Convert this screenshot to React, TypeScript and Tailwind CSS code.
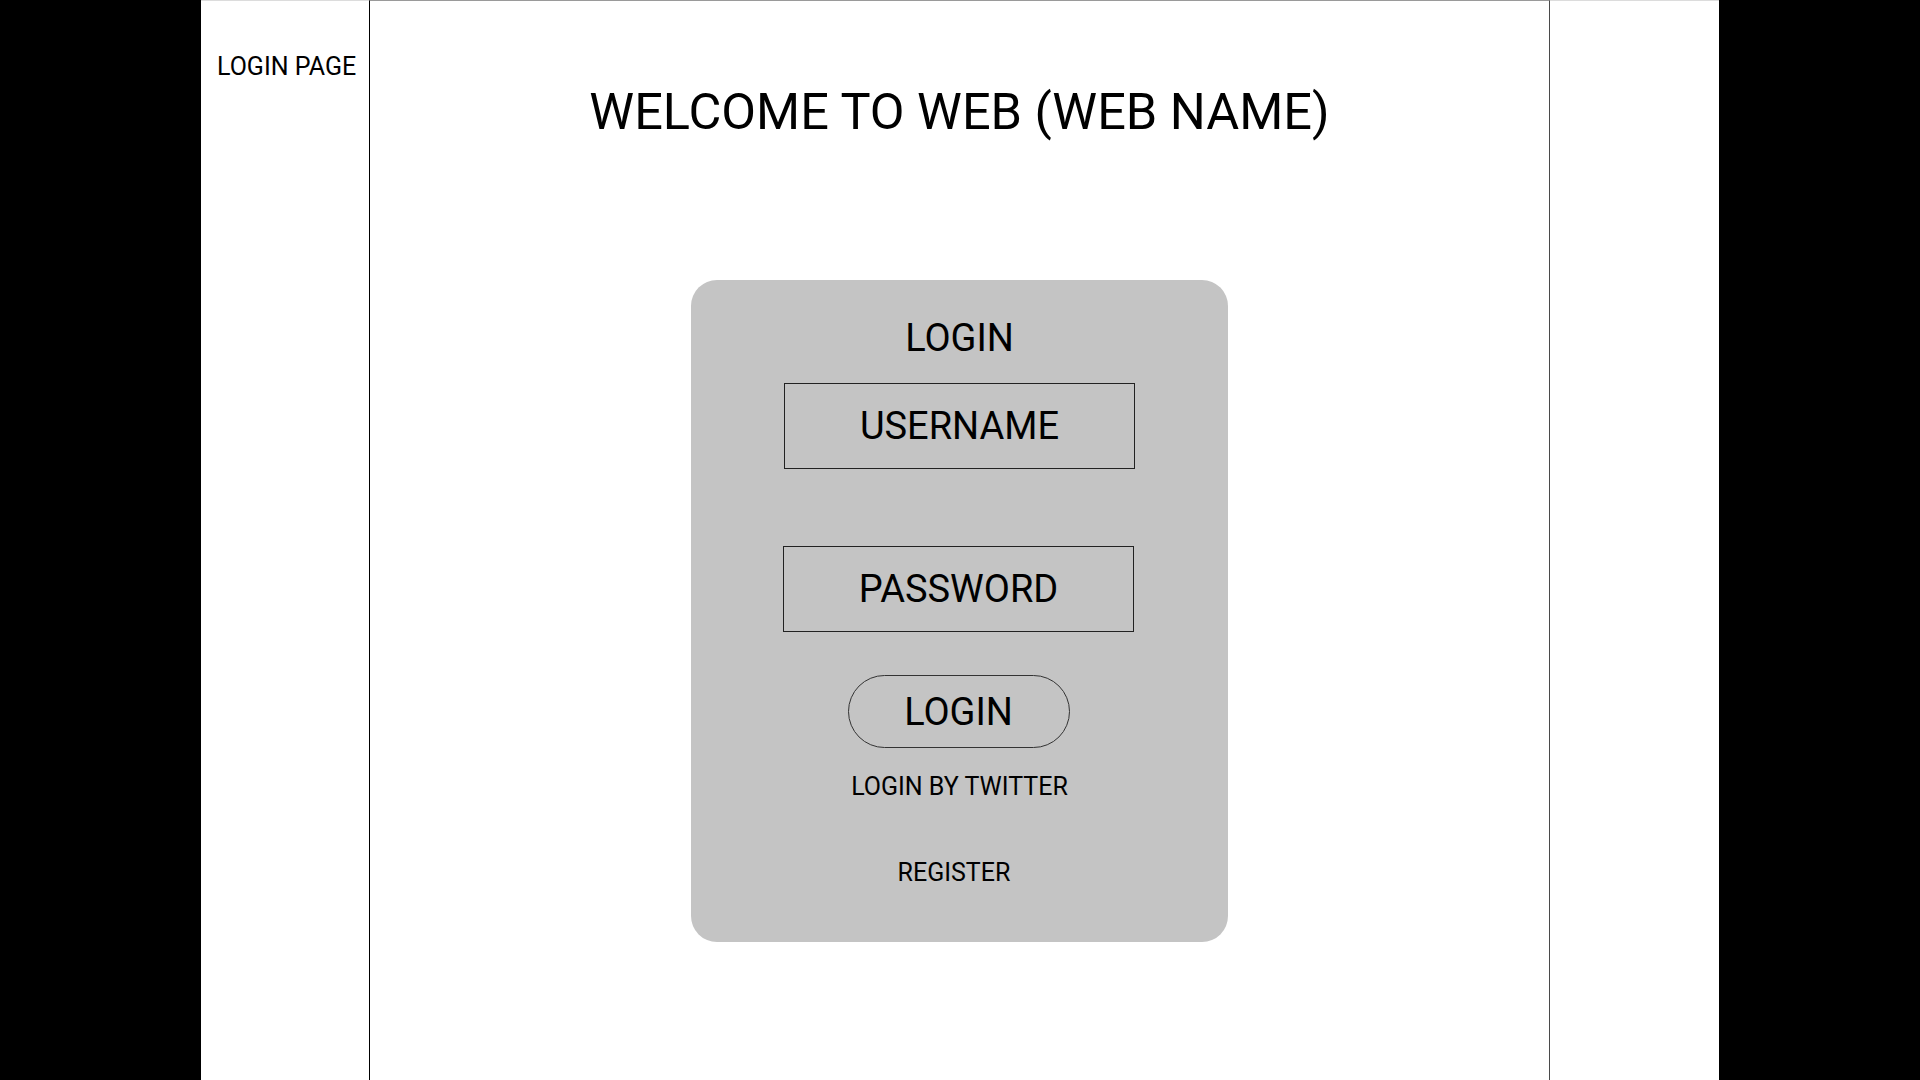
import React from "react";

export default function App() {
  return (
    <div
      className="w-[1920px] h-[1080px] bg-black flex justify-center overflow-hidden text-black"
      style={{ fontFamily: "Roboto, 'Liberation Sans', sans-serif" }}
    >
      <div className="w-[1518px] h-full bg-white flex">
        {/* Left column */}
        <div className="w-[168px] h-full border-t border-[#dcdcdc] pl-[16px] pt-[53px]">
          <div className="text-[25px] leading-[25px] whitespace-nowrap">LOGIN PAGE</div>
        </div>

        {/* Main panel */}
        <div className="w-[1181px] h-full border-t border-t-[#9a9a9a] border-l border-l-black border-r border-r-[#4a4a4a] flex flex-col items-center pt-[85px]">
          <h1 className="text-[50.5px] leading-[51px] font-normal whitespace-nowrap">
            WELCOME TO WEB (WEB NAME)
          </h1>

          <div className="mt-[143px] w-[537px] h-[662px] bg-[#c4c4c4] rounded-[26px] flex flex-col items-center pt-[39px]">
            <div className="text-[38px] leading-[38px]">LOGIN</div>

            <div className="mt-[26px] w-[351px] h-[86px] border border-[#222] flex items-center justify-center text-[38px] leading-[38px]">
              USERNAME
            </div>

            <div className="mt-[77px] w-[351px] h-[86px] border border-[#222] flex items-center justify-center text-[38px] leading-[38px] mr-[2px]">
              PASSWORD
            </div>

            <button className="mt-[43px] w-[222px] h-[73px] rounded-full border border-[#333] flex items-center justify-center text-[38px] leading-[38px] mr-[2px]">
              LOGIN
            </button>

            <div className="mt-[26px] text-[25px] leading-[25px] whitespace-nowrap">LOGIN BY TWITTER</div>

            <div className="mt-[61px] text-[25px] leading-[25px] whitespace-nowrap mr-[11px]">REGISTER</div>
          </div>
        </div>

        {/* Right column */}
        <div className="w-[169px] h-full border-t border-[#dcdcdc]" />
      </div>
    </div>
  );
}
